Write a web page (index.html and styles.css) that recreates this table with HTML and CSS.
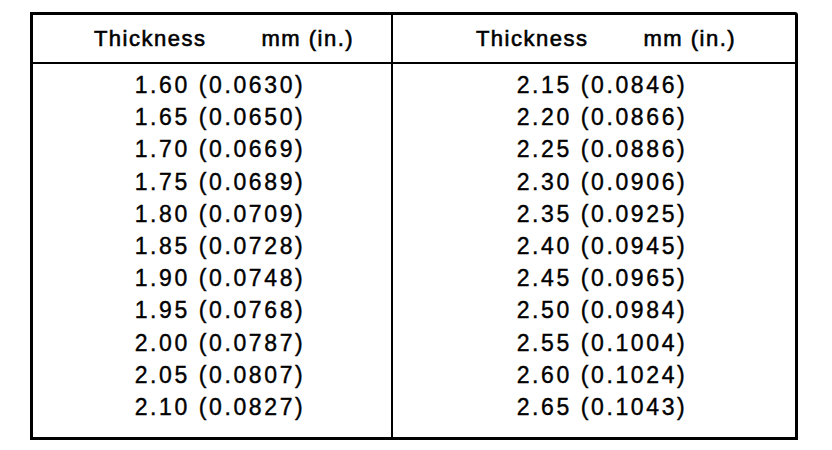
FILE: index.html
```html
<!DOCTYPE html>
<html>
<head>
<meta charset="utf-8">
<link rel="stylesheet" href="styles.css">
</head>
<body>
<div class="sheet">
  <div class="table">
    <div class="col col-left">
      <div class="head"><span>Thickness</span><span>mm (in.)</span></div>
      <div class="rows">
        <div class="row">1.60 (0.0630)</div>
        <div class="row">1.65 (0.0650)</div>
        <div class="row">1.70 (0.0669)</div>
        <div class="row">1.75 (0.0689)</div>
        <div class="row">1.80 (0.0709)</div>
        <div class="row">1.85 (0.0728)</div>
        <div class="row">1.90 (0.0748)</div>
        <div class="row">1.95 (0.0768)</div>
        <div class="row">2.00 (0.0787)</div>
        <div class="row">2.05 (0.0807)</div>
        <div class="row">2.10 (0.0827)</div>
      </div>
    </div>
    <div class="col col-right">
      <div class="head"><span>Thickness</span><span>mm (in.)</span></div>
      <div class="rows">
        <div class="row">2.15 (0.0846)</div>
        <div class="row">2.20 (0.0866)</div>
        <div class="row">2.25 (0.0886)</div>
        <div class="row">2.30 (0.0906)</div>
        <div class="row">2.35 (0.0925)</div>
        <div class="row">2.40 (0.0945)</div>
        <div class="row">2.45 (0.0965)</div>
        <div class="row">2.50 (0.0984)</div>
        <div class="row">2.55 (0.1004)</div>
        <div class="row">2.60 (0.1024)</div>
        <div class="row">2.65 (0.1043)</div>
      </div>
    </div>
  </div>
</div>
</body>
</html>
```
FILE: styles.css
```css
html, body {
  margin: 0;
  padding: 0;
  background: #fff;
}
body {
  width: 832px;
  height: 450px;
  overflow: hidden;
  font-family: "Liberation Sans", Arial, sans-serif;
  color: #000;
}
.sheet {
  padding: 12px 0 0 30px;
}
.table {
  width: 768px;
  height: 428px;
  box-sizing: border-box;
  border: 3px solid #000;
  border-top-right-radius: 3px;
  display: grid;
  grid-template-columns: 360px 1fr;
}
.col {
  display: flex;
  flex-direction: column;
}
.col-left {
  border-right: 2px solid #000;
}
.head {
  height: 47px;
  border-bottom: 2px solid #000;
  display: flex;
  align-items: center;
  justify-content: center;
  gap: 55px;
  padding-left: 24px;
  font-size: 22px;
  letter-spacing: 1.5px;
  -webkit-text-stroke: 0.6px #000;
}
.rows {
  padding-top: 5px;
  display: flex;
  flex-direction: column;
}
.row {
  height: 32.2px;
  line-height: 32.2px;
  text-align: center;
  padding-left: 16px;
  font-size: 23px;
  letter-spacing: 2.6px;
  -webkit-text-stroke: 0.4px #000;
}
```
